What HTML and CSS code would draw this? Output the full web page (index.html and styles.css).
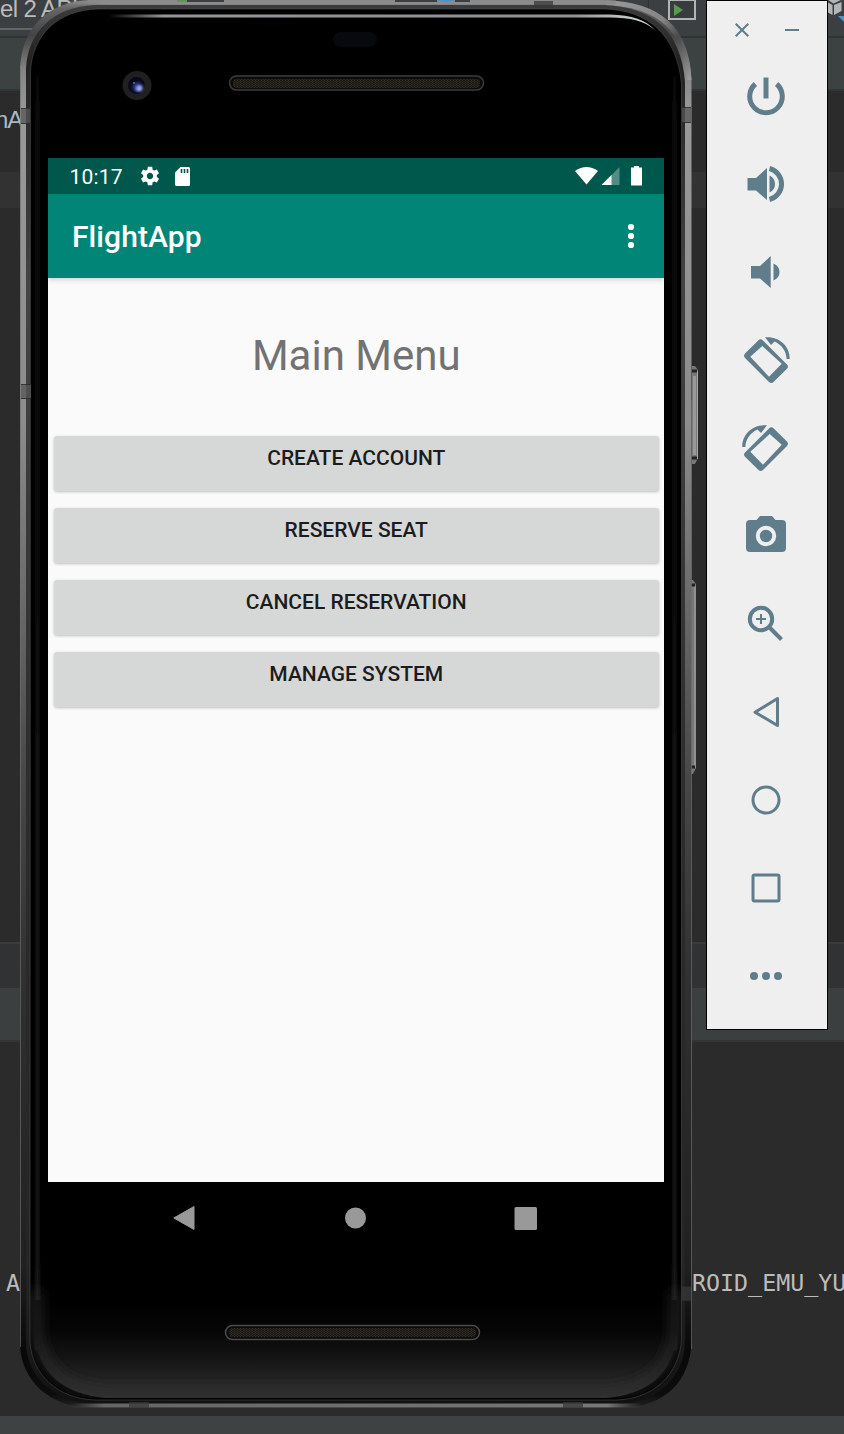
FILE: index.html
```html
<!DOCTYPE html>
<html lang="en">
<head>
<meta charset="utf-8">
<title>FlightApp</title>
<link rel="stylesheet" href="styles.css">
</head>
<body>
<div class="desktop">
  <div class="ide">
    <div class="ide-toolbar"><span>el 2 API 2</span>
      <svg class="ide-icons" width="844" height="38" viewBox="0 0 844 38">
        <path d="M0 29H40" stroke="#626566" stroke-width="2"/>
        <path d="M648.500 0V20" stroke="#303334"/>
        <rect x="669" y="0" width="26" height="19" fill="#393c3d" stroke="#b2b4b5" stroke-width="2"/>
        <path d="M674 4L683 10L674 16Z" fill="#5b9950"/>
        <path d="M827 2L832.500 5V15L827 12ZM834 5L841.500 2V11L834 15ZM828 0H841L833.500 3.500Z" fill="#b3b5b6"/>
        <path d="M838 16H844V22Z" fill="#4596d0"/>
      </svg>
    </div>
    <div class="ide-nav"></div>
    <div class="ide-tabs"><span>nA</span></div>
    <div class="ide-line"></div>
    <div class="ide-editor"></div>
    <div class="ide-split"></div>
    <div class="ide-panel"></div>
    <div class="ide-console"><span class="log-a">A</span><span class="log-b">ROID_EMU_YU</span></div>
    <div class="ide-status"></div>
  </div>

  <div class="phone">
    <svg class="shell" width="680" height="1412" viewBox="20 0 680 1412">
      <defs>
        <linearGradient id="rim" x1="0" y1="0" x2="0" y2="1">
          <stop offset="0" stop-color="#8a8a8a"/><stop offset=".006" stop-color="#666"/><stop offset=".025" stop-color="#444"/><stop offset=".05" stop-color="#858585"/><stop offset=".08" stop-color="#999"/><stop offset=".3" stop-color="#8c8c8c"/>
          <stop offset=".42" stop-color="#6c6c6c"/><stop offset=".55" stop-color="#484848"/><stop offset=".7" stop-color="#303030"/><stop offset=".9" stop-color="#202020"/><stop offset=".96" stop-color="#080808"/><stop offset=".99" stop-color="#0c0c0c"/><stop offset="1" stop-color="#222"/>
        </linearGradient>
        <linearGradient id="rim2" x1="0" y1="0" x2="0" y2="1">
          <stop offset="0" stop-color="#3c3c3c"/><stop offset=".04" stop-color="#222"/><stop offset=".2" stop-color="#444"/><stop offset=".55" stop-color="#2d2d2d"/><stop offset=".9" stop-color="#252525"/><stop offset="1" stop-color="#111"/>
        </linearGradient>
        <linearGradient id="chin" gradientUnits="userSpaceOnUse" x1="0" y1="1300" x2="0" y2="1398">
          <stop offset="0" stop-color="#000"/><stop offset=".3" stop-color="#050505"/><stop offset=".6" stop-color="#151515"/><stop offset="1" stop-color="#2f2f2f"/>
        </linearGradient>
        <linearGradient id="edge" x1="0" y1="0" x2="0" y2="1">
          <stop offset="0" stop-color="#171717" stop-opacity="0"/><stop offset=".05" stop-color="#171717"/><stop offset=".9" stop-color="#1c1c1c"/><stop offset="1" stop-color="#262626"/>
        </linearGradient>
        <linearGradient id="glint"><stop offset="0" stop-color="#8b8e92" stop-opacity="0"/><stop offset=".1" stop-color="#92959a"/><stop offset=".85" stop-color="#8f9295"/><stop offset="1" stop-color="#dae2e2"/></linearGradient>
        <linearGradient id="top"><stop offset="0" stop-color="#8c8c8c" stop-opacity="0"/><stop offset=".08" stop-color="#8c8c8c"/><stop offset="1" stop-color="#8c8c8c"/></linearGradient>
        <linearGradient id="corner" x1="0" y1="0" x2="1" y2="1"><stop offset="0" stop-color="#999"/><stop offset=".45" stop-color="#858585"/><stop offset=".65" stop-color="#4a4a4a"/><stop offset="1" stop-color="#999"/></linearGradient>
        <linearGradient id="foot"><stop offset="0" stop-color="#666" stop-opacity="0"/><stop offset=".06" stop-color="#666"/><stop offset=".94" stop-color="#777"/><stop offset="1" stop-color="#666" stop-opacity="0"/></linearGradient>
        <pattern id="mesh" width="3" height="2" patternUnits="userSpaceOnUse"><rect width="3" height="2" fill="#1b1813"/><path d="M.5 0V1M2 1V2" stroke="#35312a"/></pattern>
        <filter id="soft" filterUnits="userSpaceOnUse" x="20" y="1240" width="680" height="170"><feGaussianBlur stdDeviation="7"/></filter>
        <filter id="fine" x="-100%" width="300%"><feGaussianBlur stdDeviation="1.500 1"/></filter>
        <clipPath id="glass"><path d="M30 72C32 35 58 10 98 9H604C648 10 677 35 681 84V1338C680 1374 654 1398 616 1398H96C57 1398 32 1374 30 1342Z"/></clipPath>
      </defs>
      <g>
        <path d="M692 366H695L698 370V458L695 464H692Z" fill="#777"/>
        <path d="M694.500 376V455" stroke="#999" stroke-width="3"/><path d="M697.500 371V459" stroke="#aaa"/>
        <path d="M692 371H697M692 458H697" stroke="#222" stroke-width="3"/>
        <path d="M691 580H693L696 584V768L693 774H691Z" fill="#777"/>
        <path d="M695 586V768" stroke="#aaa"/>
        <path d="M691 585H695M691 767H695" stroke="#222" stroke-width="3"/>
      </g>
      <path d="M20 68C22 28 47 1 92 0H600C654 2 688 24 691.500 80V1342C690 1380 667 1406 622 1408H92C48 1407 22 1380 20 1346Z" fill="url(#rim)"/>
      <path d="M606 3C658 4 687 28 689 80" fill="none" stroke="url(#corner)" stroke-width="5"/>
      <rect x="66" y=".5" width="550" height="4" fill="url(#top)"/>
      <path d="M26 68C28 31 54 7 94 5H604C651 7 681 29 685 82V1342C684 1377 658 1402 620 1404H94C54 1402 28 1377 26 1346Z" fill="url(#rim2)"/>
      <path d="M20.500 68V1347M691.500 400V1349" stroke="#707070" stroke-opacity=".65"/>
      <path d="M30.500 72C32 35 58 10 98 9H604C648 10 677 35 681.500 84V1338C680 1374 654 1399 616 1400H96C57 1399 32 1374 30 1342Z" fill="#000" stroke="#555" stroke-opacity=".5"/>
      <g clip-path="url(#glass)">
        <rect x="36" y="60" width="3" height="1290" fill="url(#edge)" filter="url(#fine)"/>
        <rect x="673" y="60" width="3" height="1290" fill="url(#edge)" filter="url(#fine)"/>
        <path d="M34 1300H677V1333Q672 1392 606 1398H106Q40 1392 34 1333Z" fill="url(#chin)"/>
        <path d="M36 1290V1330Q41 1388 106 1393H606Q671 1388 676 1330V1290" fill="none" stroke="#333" stroke-width="7" filter="url(#soft)"/>
      </g>
      <path d="M108 14.500H610C632 15 646 20 656 31C644 20 630 18 610 17.500H108Z" fill="url(#glint)"/>
      <rect x="70" y="1403.500" width="572" height="4" fill="url(#foot)"/>
      <g fill="#555" fill-opacity=".75">
        <path d="M21 108H30V124H21ZM21 384H31V399H21ZM682 107H691V123H682Z"/>
        <path d="M534 1H553V8H534ZM129 1402H149V1408H129ZM563 1402H583V1408H563ZM682 1286H691V1301H682Z" fill="#383838"/>
        <path d="M21 108.500H30M21 123.500H30M21 384.500H31M21 398.500H31M682 107.500H691M682 122.500H691M682 1286.500H691M682 1301H691" stroke="#222" stroke-opacity=".7"/>
      </g>
      <path d="M177 0H187V2H177Z" fill="#5b9950"/><path d="M187 0H224V2H187ZM395 0H437V2H395ZM455 0H470V2H455Z" fill="#3c3f41"/><path d="M437 0H455Q450 2 446 2T437 0Z" fill="#4596d0"/>
      <rect x="333" y="32" width="44" height="15" rx="7.500" fill="#08090f"/>
      <rect x="229.500" y="76" width="254" height="14" rx="7" fill="#0b0b0b" stroke="#3c3c3c" stroke-width="1.500"/>
      <rect x="233" y="79" width="247" height="9" rx="4" fill="url(#mesh)"/>
      <rect x="225.500" y="1325.500" width="254" height="14" rx="7" fill="#0b0b0b" stroke="#4a4a4a" stroke-width="1.500"/>
      <rect x="229" y="1328" width="247" height="9" rx="4" fill="url(#mesh)"/>
      <circle cx="137" cy="85.500" r="14.500" fill="#202020"/>
      <circle cx="136.500" cy="85.500" r="8.500" fill="#070a1b"/>
      <g filter="url(#fine)"><circle cx="137.500" cy="87" r="5" fill="#20347a"/>
      <circle cx="139.500" cy="88.500" r="3" fill="#a6adff"/></g><circle cx="134" cy="83" r="1" fill="#5370d0"/>
    </svg>

    <div class="screen">
      <header class="status">
        <span class="clock">10:17</span>
        <svg class="gear" width="22" height="22" viewBox="0 0 24 24"><path fill="#fff" d="M19.430 12.980c.04-.32.07-.64.07-.98s-.03-.66-.07-.98l2.110-1.650c.19-.15.24-.42.12-.64l-2-3.460c-.12-.22-.39-.3-.61-.22l-2.490 1c-.52-.4-1.080-.73-1.690-.98l-.38-2.650C14.460 2.180 14.250 2 14 2h-4c-.25 0-.46.18-.49.42l-.38 2.650c-.61.25-1.170.59-1.690.98l-2.490-1c-.23-.09-.49 0-.61.22l-2 3.460c-.13.22-.07.49.12.64l2.110 1.650c-.04.32-.07.65-.07.98s.03.66.07.98l-2.110 1.650c-.19.15-.24.42-.12.64l2 3.460c.12.22.39.3.61.22l2.490-1c.52.4 1.080.73 1.690.98l.38 2.650c.03.24.24.42.49.42h4c.25 0 .46-.18.49-.42l.38-2.650c.61-.25 1.170-.59 1.690-.98l2.490 1c.23.09.49 0 .61-.22l2-3.460c.12-.22.07-.49-.12-.64l-2.110-1.650zM12 15.500c-1.930 0-3.500-1.570-3.500-3.500s1.570-3.500 3.500-3.500 3.500 1.570 3.500 3.500-1.570 3.500-3.500 3.500z"/></svg>
        <svg class="card" width="15" height="19" viewBox="0 0 15 19"><path fill="#fff" d="M5.500 0H13.500Q15 0 15 1.500V17.500Q15 19 13.500 19H1.500Q0 19 0 17.500V5.500Z"/><path d="M6.500 2V6M9.500 2V6M12.500 2V6" stroke="#00574b" stroke-width="1.600"/></svg>
        <svg class="signals" width="68" height="21" viewBox="0 0 68 21">
          <path d="M0 5Q11.500-3 23 5L11.500 18.500Z" fill="#fff"/>
          <path d="M26.500 19L44.500 1V19Z" fill="#fff" fill-opacity=".32"/><path d="M26.500 19L36.500 9V19Z" fill="#fff"/>
          <path d="M56 1.500H59V0H64V1.500H67V19.500H56Z" fill="#fff"/>
        </svg>
      </header>
      <div class="appbar"><h1>FlightApp</h1><svg width="8" height="26" viewBox="0 0 8 26" fill="#fff"><circle cx="4" cy="4" r="3.100"/><circle cx="4" cy="13" r="3.100"/><circle cx="4" cy="22" r="3.100"/></svg></div>
      <main class="content">
        <h2>Main Menu</h2>
        <button>CREATE ACCOUNT</button>
        <button>RESERVE SEAT</button>
        <button>CANCEL RESERVATION</button>
        <button>MANAGE SYSTEM</button>
      </main>
      <nav class="navbar">
        <svg width="22" height="26" viewBox="0 0 22 26"><path d="M21 1.500V24.500L.8 13Z" fill="#999" stroke="#999" stroke-linejoin="round"/></svg>
        <svg width="22" height="22" viewBox="0 0 22 22"><circle cx="11.500" cy="11" r="10.500" fill="#999"/></svg>
        <svg width="23" height="23" viewBox="0 0 23 23"><rect x=".5" width="22.500" height="23" rx="1.500" fill="#999"/></svg>
      </nav>
    </div>
  </div>

  <aside class="tools">
    <div class="window-controls">
      <svg width="14" height="14" viewBox="0 0 14 14"><path d="M.7.700L13.300 13.300M13.300.700L.7 13.300"/></svg>
      <svg width="14" height="14" viewBox="0 0 14 14"><path d="M0 7H14"/></svg>
    </div>
    <svg class="tool" viewBox="0 0 48 88"><path d="M13.400 32A16.300 16.300 0 1 0 34.600 32" class="line w5"/><path d="M24 25.500V46.500" class="line w5"/></svg>
    <svg class="tool" viewBox="0 0 48 88"><path d="M5.500 38H14L25 28V60L14 50.500H5.500Z"/><path d="M27.500 35.500Q33 38 33 44T27.500 52.500Z"/><path d="M27.500 28.500A16 16 0 0 1 27.500 59.500" class="line w5"/></svg>
    <svg class="tool" viewBox="0 0 48 88"><path d="M9 38H18L28.700 28V60L18 50.500H9Z"/><path d="M31.500 35.500Q37.500 38 37.500 44T31.500 52.500Z"/></svg>
    <svg class="tool" viewBox="0 0 48 88"><g><path fill-rule="evenodd" d="M16.500 24.300Q18.700 22.300 21 24.500L45 48.500Q47 50.700 45 52.800L31.500 66Q29.300 68 27 66L3 42Q1 39.800 3 37.500ZM20.300 30L8.300 40.700L27 60.700L39.700 47.700Z"/><path d="M23 21.300C37 20 48 30 47.700 43H44.600C44.300 35 39.500 28.500 32.500 25.500L29 29Z"/></g></svg>
    <svg class="tool" viewBox="0 0 48 88"><g transform="translate(48 0) scale(-1 1)"><path fill-rule="evenodd" d="M16.500 24.300Q18.700 22.300 21 24.500L45 48.500Q47 50.700 45 52.800L31.500 66Q29.300 68 27 66L3 42Q1 39.800 3 37.500ZM20.300 30L8.300 40.700L27 60.700L39.700 47.700Z"/><path d="M23 21.300C37 20 48 30 47.700 43H44.600C44.300 35 39.500 28.500 32.500 25.500L29 29Z"/></g></svg>
    <svg class="tool" viewBox="0 0 48 88"><path d="M8 28H14.500L18 24H30L33.500 28H40Q44 28 44 32V56Q44 60 40 60H8Q4 60 4 56V32Q4 28 8 28Z"/><circle cx="24" cy="44" r="8.200" class="lens"/></svg>
    <svg class="tool" viewBox="0 0 48 88"><circle cx="19" cy="39" r="11.200" class="line w4"/><path d="M28 48L39.500 59.500" class="line w4"/><path d="M14 39H24M19 34V44" class="line w2"/></svg>
    <svg class="tool" viewBox="0 0 48 88"><path d="M35.500 30.500V57.500L13 44.200Z" class="line w3"/></svg>
    <svg class="tool" viewBox="0 0 48 88"><circle cx="24" cy="44" r="13" class="line w3"/></svg>
    <svg class="tool" viewBox="0 0 48 88"><rect x="11" y="31" width="26" height="26" rx="1.500" class="line w3"/></svg>
    <svg class="tool" viewBox="0 0 48 88"><circle cx="12" cy="44" r="4"/><circle cx="24" cy="44" r="4"/><circle cx="36" cy="44" r="4"/></svg>
  </aside>
</div>
</body>
</html>
```
FILE: styles.css
```css
* { box-sizing: border-box; }
body { margin: 0; font-family: Roboto, "Liberation Sans", sans-serif; }
.desktop { position: relative; width: 844px; height: 1434px; overflow: hidden; background: #2b2b2b; }
svg { display: block; flex: none; }

.ide { display: flex; flex-direction: column; height: 1434px; color: #bbb; }
.ide-toolbar { position: relative; height: 38px; background: #3c3f41; border-bottom: 2px solid #303233; font: 24px/18px "Liberation Sans", sans-serif; letter-spacing: -.6px; white-space: nowrap; }
.ide-icons { position: absolute; left: 0; top: 0; }
.ide-nav { height: 53px; background: #3c4142; border-bottom: 2px solid #323435; }
.ide-tabs { height: 81px; padding-top: 14px; font: 24px/30px "Liberation Sans", sans-serif; color: #a9b7c6; letter-spacing: -1px; }
.ide-tabs span { margin-left: -5px; }
.ide-line { height: 36px; background: #323232; }
.ide-editor { height: 734px; }
.ide-split { height: 46px; background: #313234; border-top: 2px solid #3a3b3c; }
.ide-panel { height: 54px; background: #3b3f40; border-bottom: 2px solid #323435; }
.ide-console { height: 374px; padding: 226px 0 0 6px; display: flex; font: 23.300px/30px "DejaVu Sans Mono", monospace; overflow: hidden; }
.log-a { width: 685px; flex: none; }
.log-b { margin-left: 1px; }
.ide-status { height: 18px; background: #3f4243; }

.phone { position: absolute; left: 20px; top: 0; width: 680px; height: 1412px; padding: 158px 0 0 28px; }
.shell { position: absolute; left: 0; top: 0; }
.screen { position: relative; width: 616px; height: 1096px; display: flex; flex-direction: column; background: #fafafa; }
.status { display: flex; align-items: center; height: 36px; padding: 0 21px 0 21px; background: #00574b; color: #fff; }
.clock { width: 55px; padding: 2px 0 0 .5px; font-size: 21px; line-height: 36px; letter-spacing: .2px; }
.gear { margin-left: 14.500px; }
.card { margin-left: 14.500px; }
.signals { margin-left: auto; }
.appbar { display: flex; align-items: center; justify-content: space-between; height: 84px; padding: 0 29px 0 24px; background: #008577; color: #fff; box-shadow: 0 2px 5px rgba(0,0,0,.15); }
.appbar h1 { margin: 0; padding-top: 2px; font-size: 30px; font-weight: 500; line-height: 36px; letter-spacing: .1px; }
.content { height: 904px; padding: 47px 5px 0 5.500px; display: flex; flex-direction: column; }
.content h2 { margin: 0 0 49px; height: 62px; font-size: 42px; font-weight: 400; line-height: 62px; text-align: center; color: #727272; }
.content button { height: 55px; margin-bottom: 17px; padding: 0 0 11px; border: 0; border-radius: 3px; background: #d6d8d7; color: #1c1c1c; font: 500 21px/24px Roboto, sans-serif; box-shadow: 0 1px 3px rgba(0,0,0,.24); flex: none; }
.navbar { display: flex; align-items: center; justify-content: space-between; height: 72px; padding: 0 127px 0 125px; background: #000; }

.tools { position: absolute; left: 706px; top: 0; width: 122px; height: 1030px; display: flex; flex-direction: column; align-items: center; background: #efefef; border: 1px solid #000; }
.window-controls { display: flex; gap: 36px; height: 51px; padding: 22px 1px 0 0; }
.window-controls path { fill: none; stroke: #607d8b; stroke-width: 2; }
.tool { width: 48px; height: 88px; margin-right: 2px; fill: #607d8b; }
.line { fill: none; stroke: #607d8b; stroke-linejoin: round; }
.w5 { stroke-width: 5; }
.w4 { stroke-width: 4; }
.w3 { stroke-width: 3; }
.w2 { stroke-width: 2; }
.lens { fill: #607d8b; stroke: #efefef; stroke-width: 4; }
```
